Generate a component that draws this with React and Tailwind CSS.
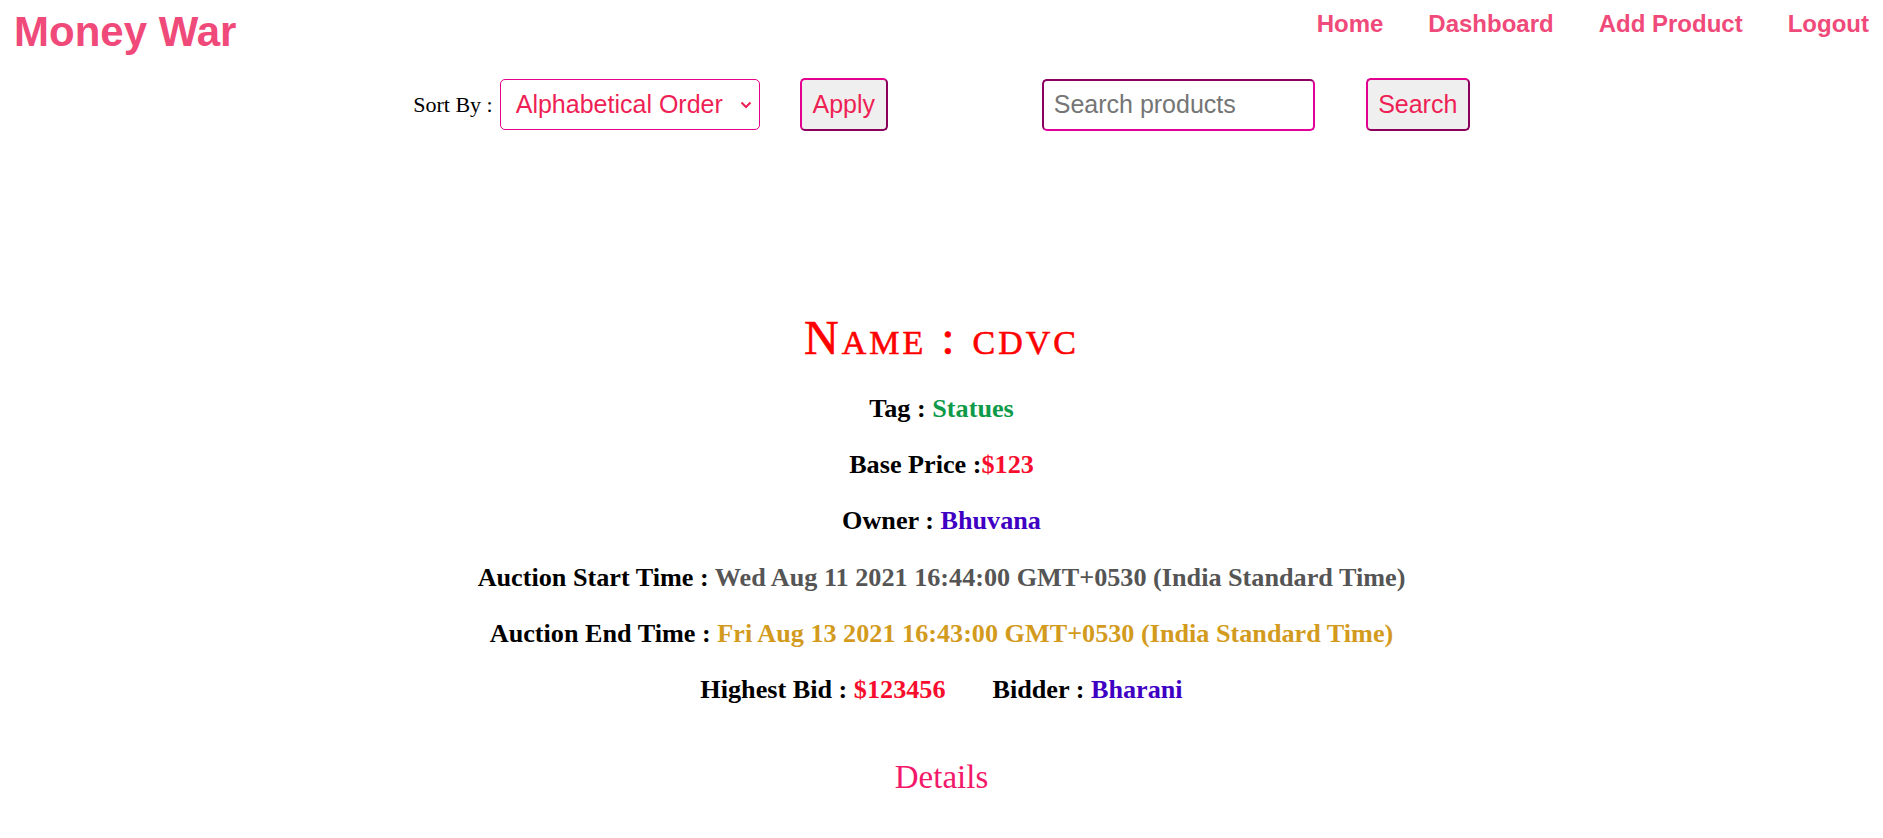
import { useState } from 'react'

const NAV_LINKS = ['Home', 'Dashboard', 'Add Product', 'Logout']

const product = {
  name: 'cdvc',
  tag: 'Statues',
  basePrice: 123,
  owner: 'Bhuvana',
  start: 'Wed Aug 11 2021 16:44:00 GMT+0530 (India Standard Time)',
  end: 'Fri Aug 13 2021 16:43:00 GMT+0530 (India Standard Time)',
  highestBid: 123456,
  bidder: 'Bharani'
}

const Header = () => (
  <header className="flex items-start justify-between">
    <h1 className="pl-[14px] pt-[8px] font-['Liberation_Sans',Arial,sans-serif] text-[42px] font-bold leading-[48px] text-[#ef4a7a]">
      Money War
    </h1>
    <nav className="flex gap-[45px] pr-[14px] pt-[10px] font-['Liberation_Sans',Arial,sans-serif] text-[24px] font-bold leading-[28px] text-[#ef4a7a]">
      {NAV_LINKS.map((link) => (
        <a key={link} href="#" className="hover:underline">
          {link}
        </a>
      ))}
    </nav>
  </header>
)

const Toolbar = () => {
  const [sort, setSort] = useState('alpha')
  const [query, setQuery] = useState('')

  return (
    <div className="mt-[22px] flex items-center justify-center font-['Liberation_Sans',Arial,sans-serif]">
      <label className="font-['Liberation_Serif','Times_New_Roman',serif] text-[22px] text-black">
        Sort By :
      </label>
      {/* Sort select */}
      <div className="relative ml-[7px]">
        <select
          value={sort}
          onChange={(e) => setSort(e.target.value)}
          className="h-[51px] w-[260px] appearance-none rounded-[5px] border border-[#e6008a] bg-white pl-[15px] text-[25px] text-[#ee1f55] outline-none"
        >
          <option value="alpha">Alphabetical Order</option>
          <option value="price">Base Price</option>
          <option value="time">Auction End Time</option>
        </select>
        <svg
          className="pointer-events-none absolute right-[8px] top-[22px] h-[8px] w-[12px]"
          viewBox="0 0 12 8"
          fill="none"
          stroke="#ee1f55"
          strokeWidth="2"
        >
          <path d="M1.5 1.5 6 6l4.5-4.5" />
        </svg>
      </div>
      <button
        type="button"
        className="ml-[40px] h-[53px] w-[88px] rounded-[5px] border-2 border-b-[#8b005a] border-l-[#e3008f] border-r-[#8b005a] border-t-[#e3008f] bg-[#efefef] text-[25px] text-[#ee1f55]"
      >
        Apply
      </button>
      <input
        type="text"
        value={query}
        onChange={(e) => setQuery(e.target.value)}
        placeholder="Search products"
        className="ml-[154px] h-[52px] w-[273px] rounded-[5px] border-2 border-b-[#e3009a] border-l-[#8b005f] border-r-[#e3009a] border-t-[#8b005f] bg-white px-[10px] text-[25px] text-black outline-none placeholder:text-[#757575]"
      />
      <button
        type="button"
        className="ml-[51px] h-[53px] w-[104px] rounded-[5px] border-2 border-b-[#8b005a] border-l-[#e3008f] border-r-[#8b005a] border-t-[#e3008f] bg-[#efefef] text-[25px] text-[#ee1f55]"
      >
        Search
      </button>
    </div>
  )
}

const Field = ({ label, children }) => (
  <p className="leading-[56.2px]">
    {label}
    {children}
  </p>
)

const ProductDetail = ({ item }) => (
  <section className="mt-[179px] flex flex-col items-center text-center">
    <h2 className="font-['Liberation_Serif','Times_New_Roman',serif] text-[48px] leading-[55px] tracking-[3px] text-[#ff0000] [font-variant:small-caps] [-webkit-text-stroke:0.6px_#ff0000]">
      Name : {item.name}
    </h2>
    <div className="mt-[16px] font-['Liberation_Serif','Times_New_Roman',serif] text-[26.2px] font-bold text-black">
      <Field label="Tag : ">
        <span className="text-[#0e9a48]">{item.tag}</span>
      </Field>
      <Field label="Base Price :">
        <span className="text-[#f70d2d]">${item.basePrice}</span>
      </Field>
      <Field label="Owner : ">
        <span className="text-[#3f00c4]">{item.owner}</span>
      </Field>
      <Field label="Auction Start Time : ">
        <span className="text-[#555555]">{item.start}</span>
      </Field>
      <Field label="Auction End Time : ">
        <span className="text-[#d39b1e]">{item.end}</span>
      </Field>
      <Field label="Highest Bid : ">
        <span className="text-[#f70d2d]">${item.highestBid}</span>
        <span className="ml-[47px]">Bidder : </span>
        <span className="text-[#3f00c4]">{item.bidder}</span>
      </Field>
    </div>
    <h3 className="mt-[40px] font-['Liberation_Serif','Times_New_Roman',serif] text-[33px] leading-[38px] text-[#f2186a]">
      Details
    </h3>
  </section>
)

export default function App() {
  return (
    <div className="min-h-screen bg-white">
      <Header />
      <Toolbar />
      <ProductDetail item={product} />
    </div>
  )
}
